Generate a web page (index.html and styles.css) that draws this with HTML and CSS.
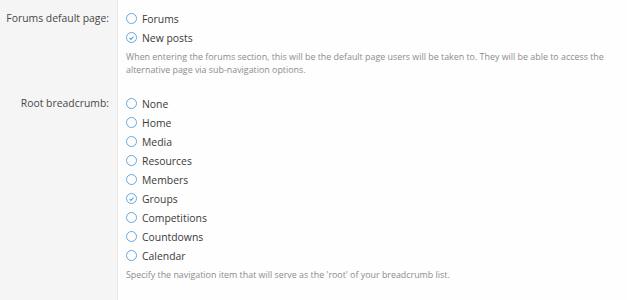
FILE: index.html
```html
<!DOCTYPE html>
<html lang="en">
<head>
    <meta charset="UTF-8">
    <title>Options</title>
    <link rel="stylesheet" href="styles.css">
</head>
<body>
    <div class="form">
        <div class="row">
            <div class="label">Forums default page:</div>
            <div class="field">
                <ul class="choices">
                    <li><span class="radio"></span>Forums</li>
                    <li><span class="radio checked"><svg viewBox="0 0 12 12"><path d="M3.4 6.1 L5.2 7.9 L8.6 4.3"/></svg></span>New posts</li>
                </ul>
                <p class="hint">When entering the forums section, this will be the default page users will be taken to. They will be able to access the alternative page via sub-navigation options.</p>
            </div>
        </div>
        <div class="row">
            <div class="label">Root breadcrumb:</div>
            <div class="field">
                <ul class="choices">
                    <li><span class="radio"></span>None</li>
                    <li><span class="radio"></span>Home</li>
                    <li><span class="radio"></span>Media</li>
                    <li><span class="radio"></span>Resources</li>
                    <li><span class="radio"></span>Members</li>
                    <li><span class="radio checked"><svg viewBox="0 0 12 12"><path d="M3.4 6.1 L5.2 7.9 L8.6 4.3"/></svg></span>Groups</li>
                    <li><span class="radio"></span>Competitions</li>
                    <li><span class="radio"></span>Countdowns</li>
                    <li><span class="radio"></span>Calendar</li>
                </ul>
                <p class="hint">Specify the navigation item that will serve as the 'root' of your breadcrumb list.</p>
            </div>
        </div>
        <div class="row filler">
            <div class="label"></div>
            <div class="field"></div>
        </div>
    </div>
</body>
</html>
```

FILE: styles.css
```css
html, body {
    margin: 0;
    padding: 0;
    height: 100%;
    font-family: "Open Sans", "Noto Sans", sans-serif;
    background: #fefefe;
}

.form {
    display: flex;
    flex-direction: column;
    min-height: 100%;
}

.row {
    display: grid;
    grid-template-columns: 118px 1fr;
}

.row.filler {
    flex: 1;
}

.label {
    background: #f5f5f5;
    border-right: 1px solid #e8e8e8;
    text-align: right;
    padding: 9px 8px 9px 0;
    font-size: 10.4px;
    line-height: 19px;
    color: #474747;
}

.field {
    padding: 9px 8px 9px 8px;
}

.choices {
    list-style: none;
    margin: 0;
    padding: 0;
}

.choices li {
    display: flex;
    align-items: center;
    height: 19px;
    font-size: 10.4px;
    color: #3a3a3a;
}

.radio {
    width: 9px;
    height: 9px;
    border: 1.5px solid #6aa6d8;
    border-radius: 50%;
    margin-right: 5px;
    display: flex;
    align-items: center;
    justify-content: center;
}

.radio svg {
    width: 12px;
    height: 12px;
    fill: none;
    stroke: #5a9bd1;
    stroke-width: 1.4;
}

.hint {
    margin: 3px 0 0 0;
    font-size: 8.9px;
    line-height: 13px;
    color: #8c8c8c;
}
```
